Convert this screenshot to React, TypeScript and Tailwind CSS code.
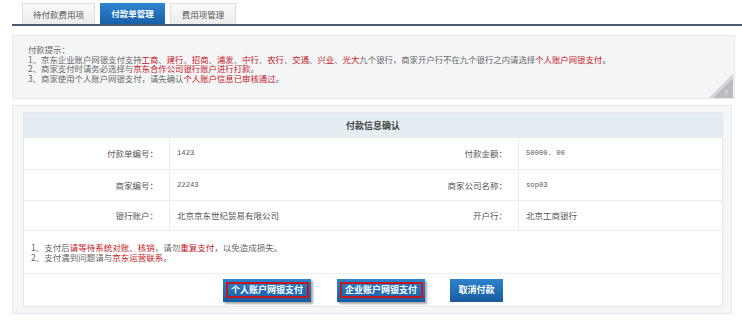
import React from "react";

const R = ({ children }: { children: React.ReactNode }) => (
  <span className="text-[#c4161c]">{children}</span>
);

const num = { fontFamily: '"Liberation Mono", monospace' };

export default function App() {
  const font = { fontFamily: '"Noto Sans CJK SC", "Liberation Sans", sans-serif' };
  return (
    <div className="w-[742px] h-[324px] bg-white text-[#555]" style={font}>
      {/* tabs */}
      <div className="ml-[12px] pt-[3px] pl-[10px] flex gap-[5px] border-b-2 border-[#4a5a6e]">
        <div className="w-[73px] h-[21px] flex items-center justify-center text-[8.5px] text-[#555] bg-gradient-to-b from-[#fafafa] to-[#ececec] border border-b-0 border-[#dcdcdc]">
          待付款费用项
        </div>
        <div className="w-[65px] h-[21px] flex items-center justify-center text-[8.5px] font-bold text-white bg-gradient-to-b from-[#2f86d0] to-[#1760a8]">
          付款单管理
        </div>
        <div className="w-[66px] h-[21px] flex items-center justify-center text-[8.5px] text-[#555] bg-gradient-to-b from-[#fafafa] to-[#ececec] border border-b-0 border-[#dcdcdc]">
          费用项管理
        </div>
      </div>

      {/* notice */}
      <div className="relative ml-[12px] mt-[9px] w-[723px] h-[64px] bg-[#f4f5f7] border border-[#e6e8eb] pl-[15px] pt-[9px] text-[8.4px] leading-[9.5px] text-[#666]">
        <div>付款提示：</div>
        <div>
          1、京东企业账户网银支付支持<R>工商</R>、<R>建行</R>、<R>招商</R>、<R>浦发</R>、<R>中行</R>、<R>农行</R>、<R>交通</R>、<R>兴业</R>、<R>光大</R>九个银行，商家开户行不在九个银行之内请选择<R>个人账户网银支付</R>。
        </div>
        <div>
          2、商家支付时请务必选择与<R>京东合作公司银行账户进行打款</R>。
        </div>
        <div>
          3、商家使用个人账户网银支付，请先确认<R>个人账户信息已审核通过</R>。
        </div>
        <svg className="absolute right-[1px] bottom-[0px]" width="24" height="24" viewBox="0 0 24 24">
          <polygon points="24,0 24,24 0,24" fill="#b9bcc1" />
          <polygon points="24,0 0,24 4,24 24,4" fill="#d6d8db" />
          <text x="16" y="21" fontSize="6" fill="#e8e8e8">F</text>
        </svg>
      </div>

      {/* panel */}
      <div className="ml-[12px] mt-[6px] w-[720px] h-[209px] bg-[#f5f6f8] border border-[#e3e6ea] pl-[10px] pr-[9px] pt-[6px]">
        <table className="w-[699px] border-collapse bg-white text-[8.5px] border border-[#e6e6e6] table-fixed">
          <colgroup>
            <col className="w-[146px]" />
            <col className="w-[204px]" />
            <col className="w-[145px]" />
            <col className="w-[204px]" />
          </colgroup>
          <tbody>
            <tr className="h-[25px] bg-[#e3edf2]">
              <td colSpan={4} className="text-center font-bold text-[#444] text-[9px]">
                付款信息确认
              </td>
            </tr>
            <tr className="h-[32px] border-b border-[#ececec]">
              <td className="text-right pr-[11px] border-r border-[#ececec]">付款单编号：</td>
              <td className="pl-[7px] text-[7.2px]" style={num}>1423</td>
              <td className="text-right pr-[11px] border-r border-[#ececec]">付款金额：</td>
              <td className="pl-[7px] text-[7.2px]" style={num}>50000. 00</td>
            </tr>
            <tr className="h-[31px] border-b border-[#ececec]">
              <td className="text-right pr-[11px] border-r border-[#ececec]">商家编号：</td>
              <td className="pl-[7px] text-[7.2px]" style={num}>22243</td>
              <td className="text-right pr-[11px] border-r border-[#ececec]">商家公司名称：</td>
              <td className="pl-[7px] text-[7.2px]" style={num}>sop03</td>
            </tr>
            <tr className="h-[30px] border-b border-[#ececec]">
              <td className="text-right pr-[11px] border-r border-[#ececec]">银行账户：</td>
              <td className="pl-[7px]">北京京东世纪贸易有限公司</td>
              <td className="text-right pr-[11px] border-r border-[#ececec]">开户行：</td>
              <td className="pl-[7px]">北京工商银行</td>
            </tr>
            <tr className="h-[43px] border-b border-[#ececec]">
              <td colSpan={4} className="pl-[7px] text-[8.5px] leading-[10px] text-[#666]">
                <div>
                  1、支付后<R>请等待系统对账、核销</R>，请勿<R>重复支付</R>，以免造成损失。
                </div>
                <div>
                  2、支付遇到问题请与<R>京东运营联系</R>。
                </div>
              </td>
            </tr>
            <tr className="h-[33px]">
              <td colSpan={4}>
                <div className="flex items-center pl-[199px]">
                  <button className="w-[88px] h-[23px] bg-gradient-to-b from-[#2c82cc] to-[#1a5d9f] shadow-[2px_2px_2px_rgba(0,0,0,0.35)] flex items-center justify-center">
                    <span className="w-[83px] h-[16px] border-2 border-[#c4161c] flex items-center justify-center text-white font-bold text-[9px] whitespace-nowrap">
                      个人账户网银支付
                    </span>
                  </button>
                  <button className="ml-[26px] w-[88px] h-[23px] bg-gradient-to-b from-[#2c82cc] to-[#1a5d9f] shadow-[2px_2px_2px_rgba(0,0,0,0.35)] flex items-center justify-center">
                    <span className="w-[83px] h-[16px] border-2 border-[#c4161c] flex items-center justify-center text-white font-bold text-[9px] whitespace-nowrap">
                      企业账户网银支付
                    </span>
                  </button>
                  <button className="ml-[25px] w-[53px] h-[23px] bg-gradient-to-b from-[#2c82cc] to-[#1a5d9f] flex items-center justify-center text-white font-bold text-[9px] whitespace-nowrap">
                    取消付款
                  </button>
                </div>
              </td>
            </tr>
          </tbody>
        </table>
      </div>
    </div>
  );
}
